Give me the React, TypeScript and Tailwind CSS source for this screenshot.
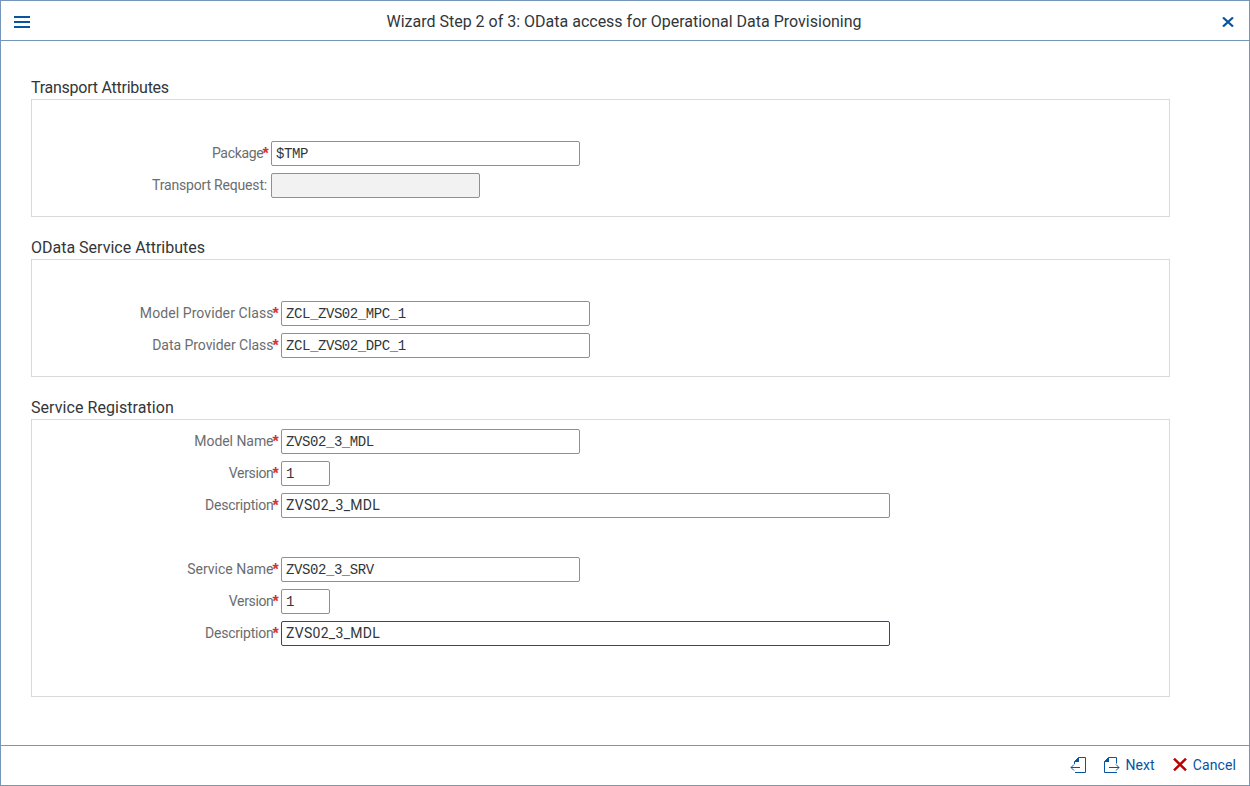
import React from "react";

type FieldProps = {
  label: string;
  value?: string;
  labelWidth: string;
  tracking: string;
  width: string;
  mono?: boolean;
  required?: boolean;
  disabled?: boolean;
  focused?: boolean;
};

function Field({ label, value = "", labelWidth, tracking, width, mono = true, required = true, disabled, focused }: FieldProps) {
  return (
    <div className="flex h-[25px] items-center">
      <div className={`${labelWidth} flex h-[23px] shrink-0 justify-end text-sm leading-[22px] text-[#6a6d70]`}>
        <span className={`${tracking} whitespace-nowrap ${required ? "" : "pr-1"}`}>
          {label}
          {!required && ":"}
        </span>
        {required && (
          <span className="mr-[2.5px] w-[5px] indent-[-1px] font-['Liberation_Sans',sans-serif] text-base font-bold leading-[23px] text-[#d93030]">*</span>
        )}
      </div>
      <div
        className={`${width} flex h-[25px] shrink-0 items-center rounded-[2px] border pl-1 text-[#32363a] ${
          disabled ? "bg-[#f2f2f2]" : "bg-white"
        } ${focused ? "border-[#0854a0]" : "border-[#89919a]"}`}
      >
        <span
          className={
            mono
              ? "pt-px font-['Liberation_Mono',monospace] text-[14px] leading-5 tracking-[-0.42px]"
              : "pb-px text-sm tracking-[0.3px]"
          }
        >
          {value}
        </span>
      </div>
    </div>
  );
}

function Section({ title, tracking, box, children }: { title: string; tracking: string; box: string; children: React.ReactNode }) {
  return (
    <section className="w-[1139px]">
      <h2 className={`h-[22px] text-base leading-[22px] ${tracking}`}>{title}</h2>
      <div className={`${box} flex flex-col gap-[7px] border border-[#d9d9d9]`}>{children}</div>
    </section>
  );
}

export default function App() {
  return (
    <div className="flex h-[786px] w-[1250px] flex-col border border-[#7596b8] bg-white font-['Roboto',sans-serif] text-[#32363a]">
      <header className="flex h-10 items-center border-b border-[#7596b8] pl-[13px] pr-[15px]">
        <svg className="mt-[3px] h-3 w-4" viewBox="0 0 16 12" fill="#0854a0" shapeRendering="crispEdges">
          <path d="M0 0h16v2H0zM0 5h16v2H0zM0 10h16v2H0z" />
        </svg>
        <h1 className="grow pr-[4px] pt-[2px] text-center text-base leading-6">
          Wizard Step 2 of 3: OData access for Operational Data Provisioning
        </h1>
        <svg className="mt-[3px] h-[10px] w-3" viewBox="0 0 12 10" fill="none" stroke="#0854a0" strokeWidth="2.2">
          <path d="M1 .5 11 9.5M11 .5 1 9.5" />
        </svg>
      </header>
      <main className="flex grow flex-col gap-5 pl-[30px] pt-9">
        <Section title="Transport Attributes" tracking="tracking-[-0.25px]" box="h-[118px] pt-[41px]">
          <Field label="Package" value="$TMP" labelWidth="w-[239px]" tracking="tracking-[-0.3px]" width="w-[309px]" />
          <Field label="Transport Request" required={false} disabled labelWidth="w-[239px]" tracking="tracking-[-0.18px]" width="w-[209px]" />
        </Section>
        <Section title="OData Service Attributes" tracking="tracking-normal" box="h-[118px] pt-[41px]">
          <Field label="Model Provider Class" value="ZCL_ZVS02_MPC_1" labelWidth="w-[249px]" tracking="tracking-[0.08px]" width="w-[309px]" />
          <Field label="Data Provider Class" value="ZCL_ZVS02_DPC_1" labelWidth="w-[249px]" tracking="tracking-[-0.04px]" width="w-[309px]" />
        </Section>
        <Section title="Service Registration" tracking="tracking-[0.06px]" box="h-[278px] pt-[9px]">
          <Field label="Model Name" value="ZVS02_3_MDL" labelWidth="w-[249px]" tracking="tracking-[-0.05px]" width="w-[299px]" />
          <Field label="Version" value="1" labelWidth="w-[249px]" tracking="tracking-[-0.35px]" width="w-[49px]" />
          <Field label="Description" value="ZVS02_3_MDL" mono={false} labelWidth="w-[249px]" tracking="tracking-[-0.22px]" width="w-[609px]" />
          <div className="h-[25px]" />
          <Field label="Service Name" value="ZVS02_3_SRV" labelWidth="w-[249px]" tracking="tracking-normal" width="w-[299px]" />
          <Field label="Version" value="1" labelWidth="w-[249px]" tracking="tracking-[-0.35px]" width="w-[49px]" />
          <Field label="Description" value="ZVS02_3_MDL" mono={false} focused labelWidth="w-[249px]" tracking="tracking-[-0.22px]" width="w-[609px]" />
        </Section>
      </main>
      <footer className="flex h-10 items-center justify-end border-t border-[#7996b3] pb-px pr-[13px] text-sm text-[#0854a0]">
        <svg className="mr-[18px] h-4 w-4" viewBox="0 0 16 16" fill="none" stroke="#0854a0">
          <path d="M4.500 7V4.500L8.500 .5h7v15H5M10 10.500H1M4 7.500l-3 3 3 3" />
          <path d="M4 5 9 0v5z" fill="#0854a0" stroke="none" />
        </svg>
        <svg className="mr-[5px] h-4 w-4" viewBox="0 0 16 16" fill="none" stroke="#0854a0">
          <path d="M12.500 6.500V.5h-8l-4 4v11H13M5 10.500h10M12 7.500l3 3-3 3" />
          <path d="M0 5 5 0v5z" fill="#0854a0" stroke="none" />
        </svg>
        <span className="mr-[18px] tracking-[0.1px]">Next</span>
        <svg className="mb-px mr-[6px] h-[13px] w-[14px]" viewBox="0 0 14 13" fill="none" stroke="#bb0000" strokeWidth="2.5">
          <path d="M1 .7 13 12.300M13 .7 1 12.300" />
        </svg>
        <span className="tracking-[0.1px]">Cancel</span>
      </footer>
    </div>
  );
}
